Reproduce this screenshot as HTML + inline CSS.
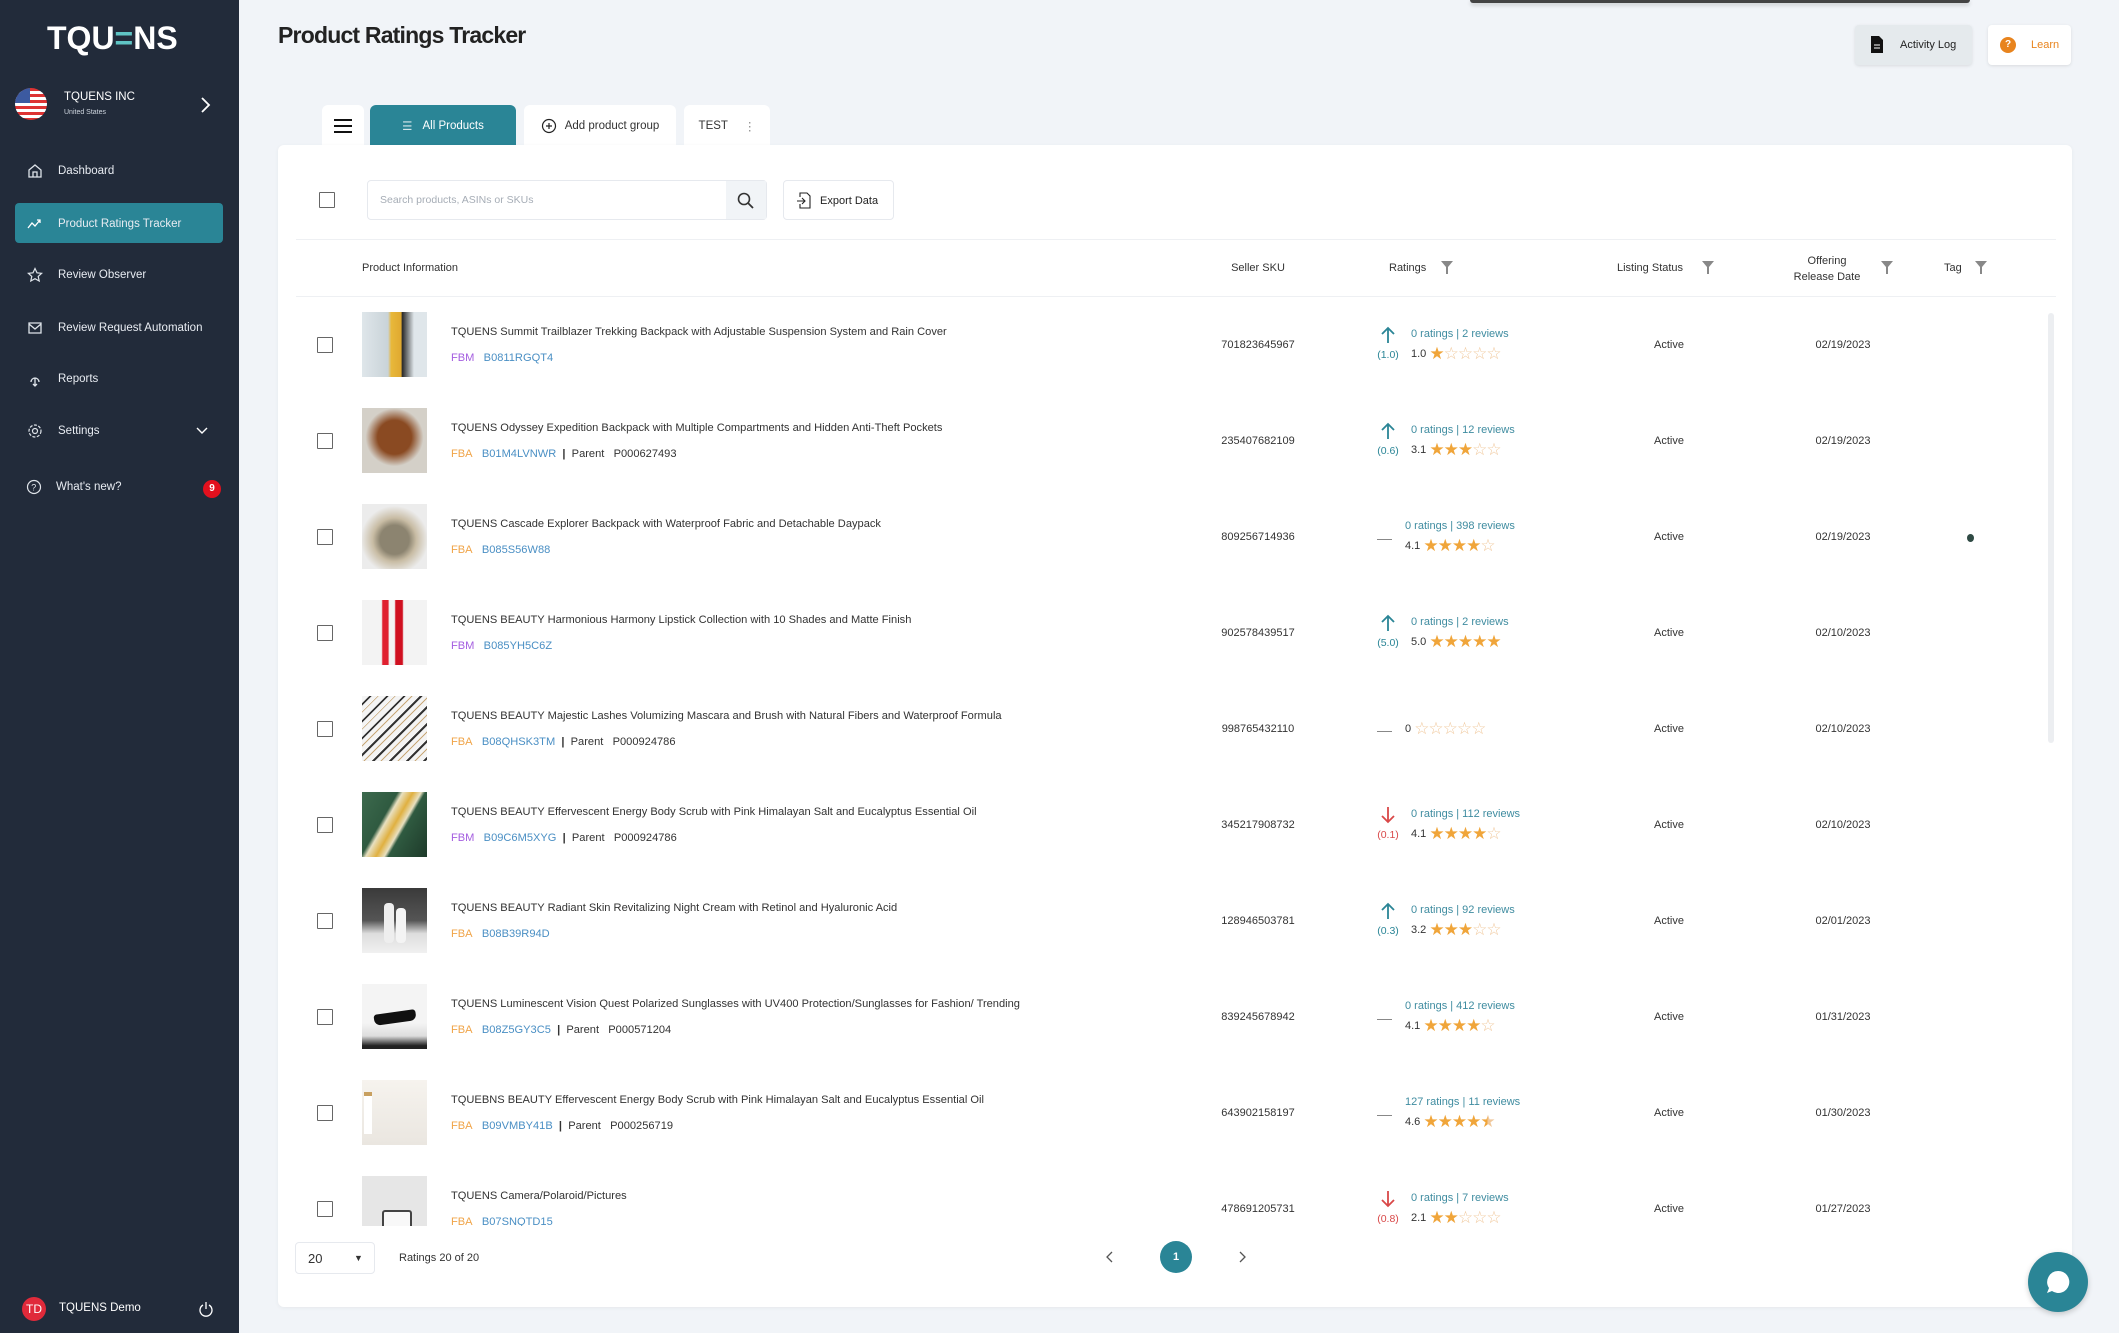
<!DOCTYPE html>
<html><head><meta charset="utf-8">
<style>
*{box-sizing:border-box;margin:0;padding:0}
body{width:2119px;height:1333px;overflow:hidden;background:#f1f4f8;font-family:"Liberation Sans",sans-serif;color:#333;position:relative}
.a{position:absolute}
.side{left:0;top:0;width:239px;height:1333px;background:#222b3a;color:#e8ecf2}
.nav{left:0;width:239px;font-size:12px;color:#e8ecf2}
.nav svg{position:absolute;left:27px;top:-8px}
.nav span{position:absolute;left:58px;top:-6px;white-space:nowrap;font-size:11.5px}
.card{left:278px;top:145px;width:1794px;height:1162px;background:#fff;border-radius:6px;box-shadow:0 1px 4px rgba(0,0,0,.05)}
.tab{top:105px;height:42px;background:#fff;border-radius:6px 6px 0 0;font-size:11.5px;display:flex;align-items:center;justify-content:center}
.cb{width:16px;height:16px;border:1.5px solid #666;border-radius:1px;background:#fff}
.hd{font-size:11px;color:#333;top:262px}
.fl{width:0;height:0;border-left:5px solid transparent;border-right:5px solid transparent;border-top:8px solid #888}
.row{left:0;width:2119px;height:96px}
.t{left:451px;top:29px;font-size:11.1px;white-space:nowrap;color:#333}
.s{left:451px;top:55px;font-size:11.1px;white-space:nowrap;color:#333}
.fbm{color:#a55ee0}.fba{color:#f0a448}.asin{color:#4a8fc4}
.img{left:362px;top:15px;width:65px;height:65px}
.sku{left:1198px;width:120px;text-align:center;top:42px;font-size:11px}
.act{left:1619px;width:100px;text-align:center;top:42px;font-size:11px}
.dt{left:1793px;width:100px;text-align:center;top:42px;font-size:11px}
.r1{top:31px;font-size:11px;color:#3f8ca0;white-space:nowrap}
.r2{top:47px;font-size:11px;color:#333;white-space:nowrap}
.st{color:#f0a53a;font-size:17px;letter-spacing:-1px;font-family:"DejaVu Sans",sans-serif;vertical-align:-2px}
.st i{font-style:normal;color:#f0c89c}
.ch{top:52px;font-size:10.5px;width:30px;text-align:center}
</style></head><body>

<div class="a side">
 <div class="a" style="left:47px;top:20px;font-size:32px;font-weight:bold;color:#fff;letter-spacing:0px">TQU<span style="color:#5fc4c4">=</span>NS</div>
 <div class="a" style="left:15px;top:88px;width:32px;height:32px;border-radius:50%;overflow:hidden;background:repeating-linear-gradient(#d33 0 3px,#fff 3px 6px)"><div style="width:15px;height:15px;background:#3c5aa0"></div></div>
 <div class="a" style="left:64px;top:91px;font-size:11.5px;color:#fff">TQUENS INC</div>
 <div class="a" style="left:64px;top:109px;font-size:7px;color:#cfd6df">United States</div>
 <svg class="a" style="left:199px;top:96px" width="12" height="18"><path d="M3 2l7 7-7 7" stroke="#fff" stroke-width="1.8" fill="none"/></svg>

 <div class="a nav" style="top:171px"><svg width="16" height="16" viewBox="0 0 16 16"><path d="M2 7l6-5 6 5v7H2z M6 14v-5h4v5" stroke="#dfe4ea" stroke-width="1.3" fill="none"/></svg><span>Dashboard</span></div>
 <div class="a" style="left:15px;top:203px;width:208px;height:40px;background:#2a8596;border-radius:4px"></div>
 <div class="a nav" style="top:224px"><svg width="16" height="16" viewBox="0 0 16 16"><path d="M1 12l4-5 3 3 5-6M10 4h3v3" stroke="#fff" stroke-width="1.3" fill="none"/></svg><span>Product Ratings Tracker</span></div>
 <div class="a nav" style="top:275px"><svg width="16" height="16" viewBox="0 0 16 16"><path d="M8 1.5l2 4.3 4.6.5-3.4 3.1 1 4.6L8 11.7 3.8 14l1-4.6L1.4 6.3 6 5.8z" stroke="#dfe4ea" stroke-width="1.2" fill="none"/></svg><span>Review Observer</span></div>
 <div class="a nav" style="top:328px"><svg width="16" height="16" viewBox="0 0 16 16"><path d="M2 3h12v10H2zM2 4l6 5 6-5" stroke="#dfe4ea" stroke-width="1.3" fill="none"/></svg><span>Review Request Automation</span></div>
 <div class="a nav" style="top:379px"><svg width="16" height="16" viewBox="0 0 16 16"><path d="M4 11a4 4 0 1 1 8 0M8 7v8M6 13l2 2 2-2" stroke="#dfe4ea" stroke-width="1.3" fill="none"/></svg><span>Reports</span></div>
 <div class="a nav" style="top:431px"><svg width="16" height="16" viewBox="0 0 16 16"><circle cx="8" cy="8" r="2.5" stroke="#dfe4ea" stroke-width="1.2" fill="none"/><circle cx="8" cy="8" r="6" stroke="#dfe4ea" stroke-width="1.2" fill="none" stroke-dasharray="3 1.5"/></svg><span>Settings</span><svg style="left:196px;top:-5px" width="12" height="10"><path d="M1 2l5 5 5-5" stroke="#fff" stroke-width="1.4" fill="none"/></svg></div>
 <div class="a nav" style="top:487px"><svg style="left:26px" width="16" height="16" viewBox="0 0 16 16"><circle cx="8" cy="8" r="6.5" stroke="#dfe4ea" stroke-width="1.2" fill="none"/><text x="5.3" y="11.5" font-size="9" fill="#dfe4ea" font-family="Liberation Sans">?</text></svg><span style="left:56px">What's new?</span></div>
 <div class="a" style="left:203px;top:480px;width:18px;height:18px;border-radius:50%;background:#e3101e;color:#fff;font-size:10px;font-weight:bold;text-align:center;line-height:18px">9</div>

 <div class="a" style="left:22px;top:1297px;width:24px;height:24px;border-radius:50%;background:#e02a3a;color:#fff;font-size:12px;text-align:center;line-height:24px">TD</div>
 <div class="a" style="left:59px;top:1302px;font-size:11.5px;color:#fff">TQUENS Demo</div>
 <svg class="a" style="left:198px;top:1300px" width="16" height="18"><path d="M5 5a6 6 0 1 0 6 0M8 2v7" stroke="#fff" stroke-width="1.3" fill="none"/></svg>
</div>

<div class="a" style="left:278px;top:22px;font-size:23px;font-weight:bold;color:#222;letter-spacing:-.8px">Product Ratings Tracker</div>
<div class="a" style="left:1470px;top:0;width:500px;height:3px;background:#444;border-radius:0 0 3px 3px;box-shadow:0 2px 4px rgba(0,0,0,.2)"></div>
<div class="a" style="left:1855px;top:25px;width:117px;height:40px;background:#e5eaed;border-radius:4px;box-shadow:0 1px 3px rgba(0,0,0,.1)">
 <svg class="a" style="left:16px;top:11px" width="12" height="17"><path d="M0 0h8l4 4v13H0z" fill="#111"/><path d="M3 9h6M3 12h6" stroke="#fff" stroke-width="1"/></svg>
 <div class="a" style="left:45px;top:14px;font-size:11px;color:#222">Activity Log</div>
</div>
<div class="a" style="left:1988px;top:25px;width:83px;height:40px;background:#fff;border-radius:4px;box-shadow:0 1px 3px rgba(0,0,0,.1)">
 <div class="a" style="left:12px;top:12px;width:16px;height:16px;border-radius:50%;background:#e8841e;color:#fff;font-size:10px;font-weight:bold;text-align:center;line-height:16px">?</div>
 <div class="a" style="left:43px;top:14px;font-size:11px;color:#e8841e">Learn</div>
</div>

<div class="a tab" style="left:322px;width:42px"><svg width="18" height="16"><path d="M0 2h18M0 8h18M0 14h18" stroke="#111" stroke-width="2"/></svg></div>
<div class="a tab" style="left:370px;width:146px;background:#2a8596;color:#fff"><span style="opacity:.8;margin-right:10px">☰</span>All Products</div>
<div class="a tab" style="left:524px;width:152px"><svg width="16" height="16" style="margin-right:8px"><circle cx="8" cy="8" r="6.5" stroke="#222" stroke-width="1.2" fill="none"/><path d="M8 5v6M5 8h6" stroke="#222" stroke-width="1.2"/></svg>Add product group</div>
<div class="a tab" style="left:684px;width:86px">TEST<span style="margin-left:16px;color:#888">⋮</span></div>

<div class="a card"></div>
<div class="a cb" style="left:319px;top:192px"></div>
<div class="a" style="left:367px;top:180px;width:400px;height:40px;border:1px solid #e6e9ee;border-radius:4px;background:#fff">
 <div class="a" style="left:12px;top:13px;font-size:10.5px;color:#a6adb6">Search products, ASINs or SKUs</div>
 <div class="a" style="right:0;top:0;width:40px;height:38px;background:#f1f4f7"><svg class="a" style="left:11px;top:11px" width="18" height="18"><circle cx="7" cy="7" r="5.5" stroke="#333" stroke-width="1.6" fill="none"/><path d="M11 11l5 5" stroke="#333" stroke-width="1.8"/></svg></div>
</div>
<div class="a" style="left:783px;top:180px;width:111px;height:40px;border:1px solid #e6e9ee;border-radius:4px;background:#fff">
 <svg class="a" style="left:13px;top:11px" width="14" height="17"><path d="M3 5V1h7l3 3v12H3v-4M0 9h8M5 6l3 3-3 3" stroke="#222" stroke-width="1.1" fill="none"/></svg>
 <div class="a" style="left:36px;top:14px;font-size:11px;color:#222">Export Data</div>
</div>
<div class="a" style="left:296px;top:239px;width:1760px;height:1px;background:#eef0f3"></div>
<div class="a" style="left:296px;top:296px;width:1760px;height:1px;background:#eef0f3"></div>
<div class="a hd" style="left:362px">Product Information</div>
<div class="a hd" style="left:1208px;width:100px;text-align:center">Seller SKU</div>
<div class="a hd" style="left:1389px">Ratings</div><svg class="a" style="left:1441px;top:261px" width="12" height="14"><path d="M0 0h12L7 6v7H5V6z" fill="#888"/></svg>
<div class="a hd" style="left:1617px">Listing Status</div><svg class="a" style="left:1702px;top:261px" width="12" height="14"><path d="M0 0h12L7 6v7H5V6z" fill="#888"/></svg>
<div class="a hd" style="left:1777px;width:100px;text-align:center;top:253px;line-height:16px">Offering<br>Release Date</div><svg class="a" style="left:1881px;top:261px" width="12" height="14"><path d="M0 0h12L7 6v7H5V6z" fill="#888"/></svg>
<div class="a hd" style="left:1944px">Tag</div><svg class="a" style="left:1975px;top:261px" width="12" height="14"><path d="M0 0h12L7 6v7H5V6z" fill="#888"/></svg>
<div class="a" style="left:2048px;top:313px;width:6px;height:430px;background:#eceef1;border-radius:3px"></div>

<div class="a" style="left:0;top:297px;width:2119px;height:929px;overflow:hidden">
<div class="a row" style="top:0">
 <div class="a cb" style="left:317px;top:40px"></div>
 <div class="a img" style="background:linear-gradient(90deg,#dfe6ea,#c9d3d8 40%,#e8b83a 45%,#e0a930 60%,#2a2a2a 62%,#dfe6ea 80%)"></div>
 <div class="a t">TQUENS Summit Trailblazer Trekking Backpack with Adjustable Suspension System and Rain Cover</div>
 <div class="a s"><span class="fbm">FBM</span>&nbsp;&nbsp; <span class="asin">B0811RGQT4</span></div>
 <div class="a sku">701823645967</div>
 <svg class="a" style="left:1380px;top:29px" width="16" height="18"><path d="M8 17V2M2 8l6-6 6 6" stroke="#2a8596" stroke-width="1.8" fill="none"/></svg>
 <div class="a ch" style="left:1373px;color:#2a8596">(1.0)</div>
 <div class="a r1" style="left:1411px">0 ratings | 2 reviews</div>
 <div class="a r2" style="left:1411px">1.0 <span class="st">★<i>☆☆☆☆</i></span></div>
 <div class="a act">Active</div><div class="a dt">02/19/2023</div>
</div>
<div class="a row" style="top:96px">
 <div class="a cb" style="left:317px;top:40px"></div>
 <div class="a img" style="background:radial-gradient(circle at 50% 45%,#8a4a22 0 35%,#d4d0c8 60%)"></div>
 <div class="a t">TQUENS Odyssey Expedition Backpack with Multiple Compartments and Hidden Anti-Theft Pockets</div>
 <div class="a s"><span class="fba">FBA</span>&nbsp;&nbsp; <span class="asin">B01M4LVNWR</span> &nbsp;<b>|</b>&nbsp; Parent &nbsp; P000627493</div>
 <div class="a sku">235407682109</div>
 <svg class="a" style="left:1380px;top:29px" width="16" height="18"><path d="M8 17V2M2 8l6-6 6 6" stroke="#2a8596" stroke-width="1.8" fill="none"/></svg>
 <div class="a ch" style="left:1373px;color:#2a8596">(0.6)</div>
 <div class="a r1" style="left:1411px">0 ratings | 12 reviews</div>
 <div class="a r2" style="left:1411px">3.1 <span class="st">★★★<i>☆☆</i></span></div>
 <div class="a act">Active</div><div class="a dt">02/19/2023</div>
</div>
<div class="a row" style="top:192px">
 <div class="a cb" style="left:317px;top:40px"></div>
 <div class="a img" style="background:radial-gradient(circle at 50% 55%,#8c8470 0 30%,#c8bca4 45%,#ececec 70%)"></div>
 <div class="a t">TQUENS Cascade Explorer Backpack with Waterproof Fabric and Detachable Daypack</div>
 <div class="a s"><span class="fba">FBA</span>&nbsp;&nbsp; <span class="asin">B085S56W88</span></div>
 <div class="a sku">809256714936</div>
 <div class="a" style="left:1377px;top:50px;width:15px;height:1px;background:#888"></div>
 <div class="a r1" style="left:1405px">0 ratings | 398 reviews</div>
 <div class="a r2" style="left:1405px">4.1 <span class="st">★★★★<i>☆</i></span></div>
 <div class="a act">Active</div><div class="a dt">02/19/2023</div>
 <div class="a" style="left:1967px;top:45px;width:7px;height:8px;border-radius:50%;background:#2f4a44"></div>
</div>
<div class="a row" style="top:288px">
 <div class="a cb" style="left:317px;top:40px"></div>
 <div class="a img" style="background:linear-gradient(90deg,#f3f3f3 30%,#e02030 32%,#e02030 40%,#f3f3f3 42%,#f3f3f3 50%,#d01020 52%,#d01020 62%,#f3f3f3 64%)"></div>
 <div class="a t">TQUENS BEAUTY Harmonious Harmony Lipstick Collection with 10 Shades and Matte Finish</div>
 <div class="a s"><span class="fbm">FBM</span>&nbsp;&nbsp; <span class="asin">B085YH5C6Z</span></div>
 <div class="a sku">902578439517</div>
 <svg class="a" style="left:1380px;top:29px" width="16" height="18"><path d="M8 17V2M2 8l6-6 6 6" stroke="#2a8596" stroke-width="1.8" fill="none"/></svg>
 <div class="a ch" style="left:1373px;color:#2a8596">(5.0)</div>
 <div class="a r1" style="left:1411px">0 ratings | 2 reviews</div>
 <div class="a r2" style="left:1411px">5.0 <span class="st">★★★★★</span></div>
 <div class="a act">Active</div><div class="a dt">02/10/2023</div>
</div>
<div class="a row" style="top:384px">
 <div class="a cb" style="left:317px;top:40px"></div>
 <div class="a img" style="background:repeating-linear-gradient(135deg,#f4f4f4 0 5px,#333 5px 7px,#f4f4f4 7px 11px,#c8a878 11px 12px)"></div>
 <div class="a t">TQUENS BEAUTY Majestic Lashes Volumizing Mascara and Brush with Natural Fibers and Waterproof Formula</div>
 <div class="a s"><span class="fba">FBA</span>&nbsp;&nbsp; <span class="asin">B08QHSK3TM</span> &nbsp;<b>|</b>&nbsp; Parent &nbsp; P000924786</div>
 <div class="a sku">998765432110</div>
 <div class="a" style="left:1377px;top:50px;width:15px;height:1px;background:#888"></div>
 <div class="a r2" style="left:1405px;top:38px">0 <span class="st"><i>☆☆☆☆☆</i></span></div>
 <div class="a act">Active</div><div class="a dt">02/10/2023</div>
</div>
<div class="a row" style="top:480px">
 <div class="a cb" style="left:317px;top:40px"></div>
 <div class="a img" style="background:linear-gradient(120deg,#3d6a4e,#2f5a40 35%,#e8e0c0 40%,#e0b040 50%,#e8e0c0 58%,#2f5a40 62%,#1e3a2a)"></div>
 <div class="a t">TQUENS BEAUTY Effervescent Energy Body Scrub with Pink Himalayan Salt and Eucalyptus Essential Oil</div>
 <div class="a s"><span class="fbm">FBM</span>&nbsp;&nbsp; <span class="asin">B09C6M5XYG</span> &nbsp;<b>|</b>&nbsp; Parent &nbsp; P000924786</div>
 <div class="a sku">345217908732</div>
 <svg class="a" style="left:1380px;top:29px" width="16" height="18"><path d="M8 1v15M2 10l6 6 6-6" stroke="#d94848" stroke-width="1.8" fill="none"/></svg>
 <div class="a ch" style="left:1373px;color:#d94848">(0.1)</div>
 <div class="a r1" style="left:1411px">0 ratings | 112 reviews</div>
 <div class="a r2" style="left:1411px">4.1 <span class="st">★★★★<i>☆</i></span></div>
 <div class="a act">Active</div><div class="a dt">02/10/2023</div>
</div>
<div class="a row" style="top:576px">
 <div class="a cb" style="left:317px;top:40px"></div>
 <div class="a img" style="background:linear-gradient(180deg,#3a3a3a 0,#555 50%,#ddd 70%,#f0f0f0);"><div class="a" style="left:22px;top:15px;width:10px;height:40px;background:#eee;border-radius:4px"></div><div class="a" style="left:34px;top:20px;width:10px;height:35px;background:#f4f4f4;border-radius:4px"></div></div>
 <div class="a t">TQUENS BEAUTY Radiant Skin Revitalizing Night Cream with Retinol and Hyaluronic Acid</div>
 <div class="a s"><span class="fba">FBA</span>&nbsp;&nbsp; <span class="asin">B08B39R94D</span></div>
 <div class="a sku">128946503781</div>
 <svg class="a" style="left:1380px;top:29px" width="16" height="18"><path d="M8 17V2M2 8l6-6 6 6" stroke="#2a8596" stroke-width="1.8" fill="none"/></svg>
 <div class="a ch" style="left:1373px;color:#2a8596">(0.3)</div>
 <div class="a r1" style="left:1411px">0 ratings | 92 reviews</div>
 <div class="a r2" style="left:1411px">3.2 <span class="st">★★★<i>☆☆</i></span></div>
 <div class="a act">Active</div><div class="a dt">02/01/2023</div>
</div>
<div class="a row" style="top:672px">
 <div class="a cb" style="left:317px;top:40px"></div>
 <div class="a img" style="background:linear-gradient(180deg,#f4f4f4 60%,#ddd 80%,#222 95%)"><div class="a" style="left:12px;top:28px;width:42px;height:11px;background:#111;border-radius:3px 3px 6px 6px;transform:rotate(-8deg)"></div></div>
 <div class="a t">TQUENS Luminescent Vision Quest Polarized Sunglasses with UV400 Protection/Sunglasses for Fashion/ Trending</div>
 <div class="a s"><span class="fba">FBA</span>&nbsp;&nbsp; <span class="asin">B08Z5GY3C5</span> &nbsp;<b>|</b>&nbsp; Parent &nbsp; P000571204</div>
 <div class="a sku">839245678942</div>
 <div class="a" style="left:1377px;top:50px;width:15px;height:1px;background:#888"></div>
 <div class="a r1" style="left:1405px">0 ratings | 412 reviews</div>
 <div class="a r2" style="left:1405px">4.1 <span class="st">★★★★<i>☆</i></span></div>
 <div class="a act">Active</div><div class="a dt">01/31/2023</div>
</div>
<div class="a row" style="top:768px">
 <div class="a cb" style="left:317px;top:40px"></div>
 <div class="a img" style="background:linear-gradient(180deg,#f6f3ee,#eae6e0)"><div class="a" style="left:2px;top:12px;width:8px;height:42px;background:#fff;border-top:4px solid #c8a060"></div></div>
 <div class="a t">TQUEBNS BEAUTY Effervescent Energy Body Scrub with Pink Himalayan Salt and Eucalyptus Essential Oil</div>
 <div class="a s"><span class="fba">FBA</span>&nbsp;&nbsp; <span class="asin">B09VMBY41B</span> &nbsp;<b>|</b>&nbsp; Parent &nbsp; P000256719</div>
 <div class="a sku">643902158197</div>
 <div class="a" style="left:1377px;top:50px;width:15px;height:1px;background:#888"></div>
 <div class="a r1" style="left:1405px">127 ratings | 11 reviews</div>
 <div class="a r2" style="left:1405px">4.6 <span class="st">★★★★<span style="background:linear-gradient(90deg,#f0a53a 50%,#f0c89c 50%);-webkit-background-clip:text;color:transparent">★</span></span></div>
 <div class="a act">Active</div><div class="a dt">01/30/2023</div>
</div>
<div class="a row" style="top:864px">
 <div class="a cb" style="left:317px;top:40px"></div>
 <div class="a img" style="background:#e6e6e6"><div class="a" style="left:20px;top:34px;width:30px;height:20px;background:#f8f8f8;border:2px solid #444;border-radius:3px"></div></div>
 <div class="a t">TQUENS Camera/Polaroid/Pictures</div>
 <div class="a s"><span class="fba">FBA</span>&nbsp;&nbsp; <span class="asin">B07SNQTD15</span></div>
 <div class="a sku">478691205731</div>
 <svg class="a" style="left:1380px;top:29px" width="16" height="18"><path d="M8 1v15M2 10l6 6 6-6" stroke="#d94848" stroke-width="1.8" fill="none"/></svg>
 <div class="a ch" style="left:1373px;color:#d94848">(0.8)</div>
 <div class="a r1" style="left:1411px">0 ratings | 7 reviews</div>
 <div class="a r2" style="left:1411px">2.1 <span class="st">★★<i>☆☆☆</i></span></div>
 <div class="a act">Active</div><div class="a dt">01/27/2023</div>
</div>
</div>

<div class="a" style="left:295px;top:1242px;width:80px;height:32px;border:1px solid #e6e9ee;border-radius:4px;background:#fff">
 <div class="a" style="left:12px;top:8px;font-size:13px">20</div>
 <div class="a" style="left:58px;top:10px;font-size:9px">▼</div>
</div>
<div class="a" style="left:399px;top:1252px;font-size:11px">Ratings 20 of 20</div>
<svg class="a" style="left:1105px;top:1250px" width="10" height="14"><path d="M7 2l-5 5 5 5" stroke="#555" stroke-width="1.3" fill="none"/></svg>
<div class="a" style="left:1160px;top:1241px;width:32px;height:32px;border-radius:50%;background:#2a8596;color:#fff;font-size:11px;font-weight:bold;text-align:center;line-height:32px">1</div>
<svg class="a" style="left:1237px;top:1250px" width="10" height="14"><path d="M3 2l5 5-5 5" stroke="#555" stroke-width="1.3" fill="none"/></svg>

<div class="a" style="left:2028px;top:1252px;width:60px;height:60px;border-radius:50%;background:#2a8596;box-shadow:0 2px 6px rgba(0,0,0,.2)">
 <svg class="a" style="left:16px;top:16px" width="28" height="28"><path d="M14 3a11 11 0 1 1-6 20l-5 2 2-5A11 11 0 0 1 14 3z" fill="#fff"/></svg>
</div>
</body></html>
